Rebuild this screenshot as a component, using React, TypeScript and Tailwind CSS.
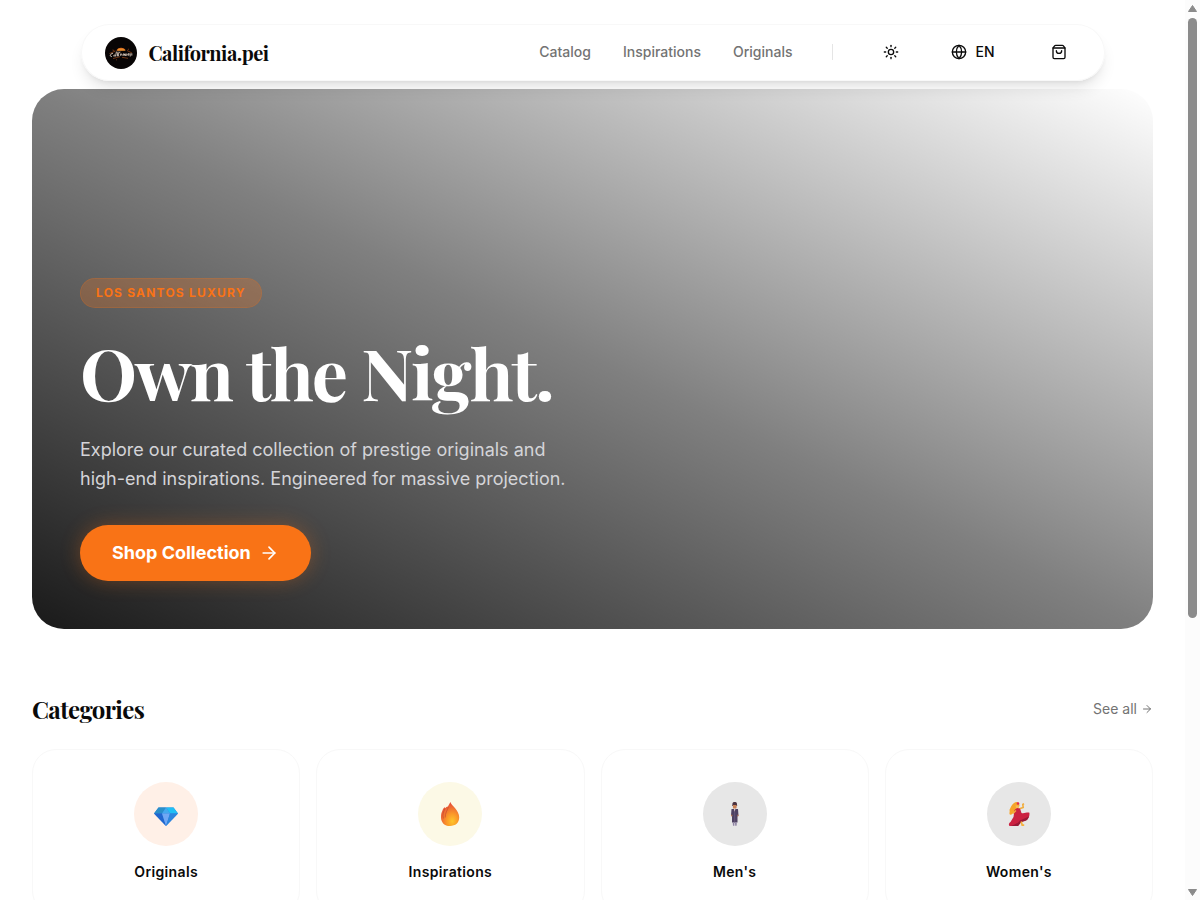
import type { ReactNode } from "react";
import { ArrowRight, Globe, ShoppingBag, Sun } from "lucide-react";

const serif = "font-['Playfair_Display','Liberation_Serif',serif] font-bold tracking-tight";

function Logo() {
  return (
    <svg viewBox="0 0 32 32" className="size-8" aria-hidden="true">
      <circle cx="16" cy="16" r="16" fill="#080505" />
      <path d="M11.5 13.800c.6-4 8-4.200 9.200-.3z" fill="#d9691c" />
      <path d="M13 12.300h6M12.300 13.300h7.800" stroke="#f7a83c" strokeWidth=".6" />
      <path
        d="M4.500 16.500l6-2.500M22 13.500l5 2.500M8 21.500l7-1.800M17 20.300l6 1M7.500 13l1.800.5M24 12l-1.200.6M11 23l1-.4"
        stroke="#8a431a"
        strokeWidth="1"
        opacity=".8"
      />
      <path
        d="M7.600 16.300c-2.200.2-3.600 3.300-1.200 3.300M8.600 18.900c.3-1.700 1.700-1.300 1.200.2M11.400 15l-.8 4M13 15l-.7 3.900M15 15c-1.500-.2-1.400 2-1.700 3.900M15.900 16.900c-1 .4-.7 2.100.3 1.400s.3-1.400-.3-1.400M18 18.500l.3-1.600c1-.2 1 .2.900 1.600l.6-1.700c.9-.2.8.6.7 1.700M21.800 16.900v1.600M23.400 16.700c-1 .4-.5 1.900.5 1.500v-1.500M25.200 16.700v2.400M26.800 16.700v1.500"
        fill="none"
        stroke="#e2d3c4"
        strokeWidth=".9"
        strokeLinecap="round"
      />
    </svg>
  );
}

function Diamond() {
  return (
    <svg viewBox="0 0 24 24" className="size-6" aria-hidden="true">
      <path d="M4.500 5.500h15L24 11.500 12 24 0 11.500z" fill="#2b7fdc" />
      <path d="M4.500 5.500H12l-4 6H0z" fill="#2a8fc9" />
      <path d="M12 5.500h7.500l4.500 6h-8z" fill="#20bff5" />
      <path d="M12 5.500l4 6H8z" fill="#43a9ee" />
      <path d="M0 11.500h8L12 24z" fill="#2166cf" />
      <path d="M8 11.500h8L12 24z" fill="#70a7f4" />
      <path d="M16 11.500h8L12 24z" fill="#2c86df" />
    </svg>
  );
}

function Flame() {
  return (
    <svg viewBox="0 0 24 24" className="size-6" aria-hidden="true">
      <defs>
        <radialGradient id="flame" cx=".62" cy=".8" r=".75">
          <stop offset="0" stopColor="#fdc52c" />
          <stop offset=".4" stopColor="#fb9a28" />
          <stop offset="1" stopColor="#e6503a" />
        </radialGradient>
      </defs>
      <path d="M12.400 0c1 3.600 8.800 8.200 8.800 15.300C21.200 20.800 17.500 24 12 24S3 20.500 3 15.200c0-3 .6-5 1.400-6.400.3-1.600 1.200-2.800 2.200-3.600.3 0 .5.500.5 1 .8-1 1.600-1.600 2.800-1.800C10.800 3 11.600 1.500 12.400 0z" fill="url(#flame)" />
      <path d="M7 6.500c-1.500 3-2.800 6-1.600 10M10.400 5c-1 3.500-3.400 6-3.200 10.500" fill="none" stroke="#c4442f" strokeWidth=".9" opacity=".7" />
    </svg>
  );
}

function Man() {
  return (
    <svg viewBox="0 0 24 24" className="size-6" aria-hidden="true">
      <path d="M9.500 1.500C9.700.3 10.700 0 11.700 0s2 .3 2.200 1.500L14.200 4h-5z" fill="#4b3240" />
      <path d="M9.900 3h3.700v2.300c0 1-.8 1.700-1.900 1.700s-1.800-.7-1.800-1.700z" fill="#c98257" />
      <path d="M8.500 7H15l.5 6.500-1 1v6H9v-6l-1-1z" fill="#4e4262" />
      <path d="M10.900 6.500h1.600l-.8 3.500z" fill="#e9d9df" />
      <path d="M8.100 12.800h1.200v1.500H8.200zM14.400 12.800h1.200l-.1 1.500h-1.100z" fill="#c98257" />
      <path d="M11.700 10v11" stroke="#74638b" strokeWidth=".6" />
      <path d="M9.700 20.500h1.700v3.300H10zM12 20.500h1.800l-.2 3.300h-1.400z" fill="#8f83a4" />
    </svg>
  );
}

function Dancer() {
  return (
    <svg viewBox="0 0 24 24" className="size-6" aria-hidden="true">
      <path d="M7 1c3-2 5.500-.6 5.500 3L8.500 8.500c-1.600 1-2 3.500-5 4.300C1.300 12 3.400 9.400 2.400 8 3.600 6 4.500 2.500 7 1z" fill="#f6a52a" />
      <path d="M8.500 3.500h3.300V7L9.500 8z" fill="#f5bd55" />
      <path d="M12.500 6.800l3.700-1.300-.4-3 1.200-.8" fill="none" stroke="#f1ad3d" strokeWidth="1.600" />
      <path d="M7.500 8l2.500-2 3 .5 1.500 4.500c2.500.8 6-1 7.900-.2.400 3-.9 6-3.400 7.500l-4.500 1.500-3.500 4.200H2.500C1.400 23 1.800 21 3.500 20L6.500 15z" fill="#cb2141" />
      <path d="M13 18.500l8.900-4c-.5 2.300-2 4.100-4 4.600l-3.900 1.200-3 3.700H4c3-1 7-2.500 9-5.500z" fill="#971936" />
      <path d="M14.200 19.500l1 3.700h2" fill="none" stroke="#f6b13c" strokeWidth="1.700" />
      <path d="M9 8.500l-3 3" stroke="#f1ad3d" strokeWidth="1.300" />
      <circle cx="11" cy="1.500" r="1.300" fill="#e02e50" />
    </svg>
  );
}

const categories: { name: string; tint: string; icon: ReactNode }[] = [
  { name: "Originals", tint: "bg-[#fff0e7]", icon: <Diamond /> },
  { name: "Inspirations", tint: "bg-[#fcf9e6]", icon: <Flame /> },
  { name: "Men's", tint: "bg-[#e7e7e7]", icon: <Man /> },
  { name: "Women's", tint: "bg-[#e7e7e7]", icon: <Dancer /> },
];

function Header() {
  return (
    <header className="relative z-10 mx-auto flex h-[57px] w-full max-w-[1024px] items-center justify-between rounded-full bg-white px-6 shadow-lg inset-ring inset-ring-[#f8f8f8]">
      <a href="#home" className="flex items-center gap-3">
        <Logo />
        <span className={`${serif} text-xl`}>California.pei</span>
      </a>
      <nav className="flex items-center gap-8 pb-0.5 text-sm font-medium text-[#737373]">
        <a href="#catalog">Catalog</a>
        <a href="#inspirations">Inspirations</a>
        <a href="#originals">Originals</a>
        <span className="mx-2 h-4 w-px bg-[#e5e5e5]" />
        <button type="button" aria-label="Toggle theme" className="flex size-9 items-center justify-center text-[#0a0a0a]">
          <Sun size={16} />
        </button>
        <button type="button" className="flex h-9 items-center gap-2 px-2.5 text-[#0a0a0a]">
          <Globe size={16} />
          EN
        </button>
        <button type="button" aria-label="Cart" className="flex size-11 items-center justify-center text-[#0a0a0a]">
          <ShoppingBag size={16} />
        </button>
      </nav>
    </header>
  );
}

function Hero() {
  return (
    <section className="mt-2 flex min-h-[60vh] flex-col items-start justify-end rounded-[32px] bg-linear-to-tr from-black/90 via-black/50 to-transparent p-12">
      <span className="rounded-full bg-[#f97316]/25 px-4 py-[7px] text-xs font-bold tracking-widest text-[#f97316] inset-ring inset-ring-[#f97316]/20">
        LOS SANTOS LUXURY
      </span>
      <h1 className={`${serif} mt-6 text-7xl leading-[1.1] text-white`}>Own the Night.</h1>
      <p className="mt-[23px] max-w-lg text-lg leading-relaxed text-[#d4d4d8]">
        Explore our curated collection of prestige originals and high-end inspirations. Engineered for massive projection.
      </p>
      <button
        type="button"
        className="mt-8 flex h-14 items-center gap-2 rounded-full bg-[#f97316] px-8 text-lg font-bold text-white shadow-[0_0_20px_rgba(249,115,22,0.3)]"
      >
        Shop Collection
        <ArrowRight size={20} />
      </button>
    </section>
  );
}

function Categories() {
  return (
    <section className="mt-16">
      <div className="flex items-center justify-between">
        <h2 className={`${serif} text-2xl`}>Categories</h2>
        <a href="#all" className="flex items-center gap-1 text-sm text-[#737373]">
          See all
          <ArrowRight size={12} />
        </a>
      </div>
      <div className="mt-6 grid grid-cols-4 gap-4">
        {categories.map((c) => (
          <a
            key={c.name}
            href={`#${c.name}`}
            className="flex flex-col items-center gap-4 rounded-3xl border border-[#f8f8f8] p-8 text-sm font-semibold tracking-wide"
          >
            <span className={`flex size-16 items-center justify-center rounded-full ${c.tint}`}>{c.icon}</span>
            {c.name}
          </a>
        ))}
      </div>
    </section>
  );
}

function ScrollRail() {
  return (
    <div className="flex w-[15px] shrink-0 flex-col items-center bg-[#fcfcfc]" aria-hidden="true">
      <svg viewBox="0 0 15 18" className="w-full">
        <path d="M7.500 5.500l4 6h-8z" fill="#8b8b8b" stroke="#8b8b8b" strokeLinejoin="round" />
      </svg>
      <div className="h-2/3 w-[9px] rounded-full bg-[#8b8b8b]" />
      <svg viewBox="0 0 15 18" className="mt-auto w-full">
        <path d="M7.500 13.500l4-6h-8z" fill="#8b8b8b" stroke="#8b8b8b" strokeLinejoin="round" />
      </svg>
    </div>
  );
}

export default function App() {
  return (
    <div className="flex h-screen bg-white font-['Inter',sans-serif] text-[#0a0a0a]">
      <main className="min-w-0 flex-1 overflow-hidden px-8 pt-6">
        <Header />
        <Hero />
        <Categories />
      </main>
      <ScrollRail />
    </div>
  );
}
